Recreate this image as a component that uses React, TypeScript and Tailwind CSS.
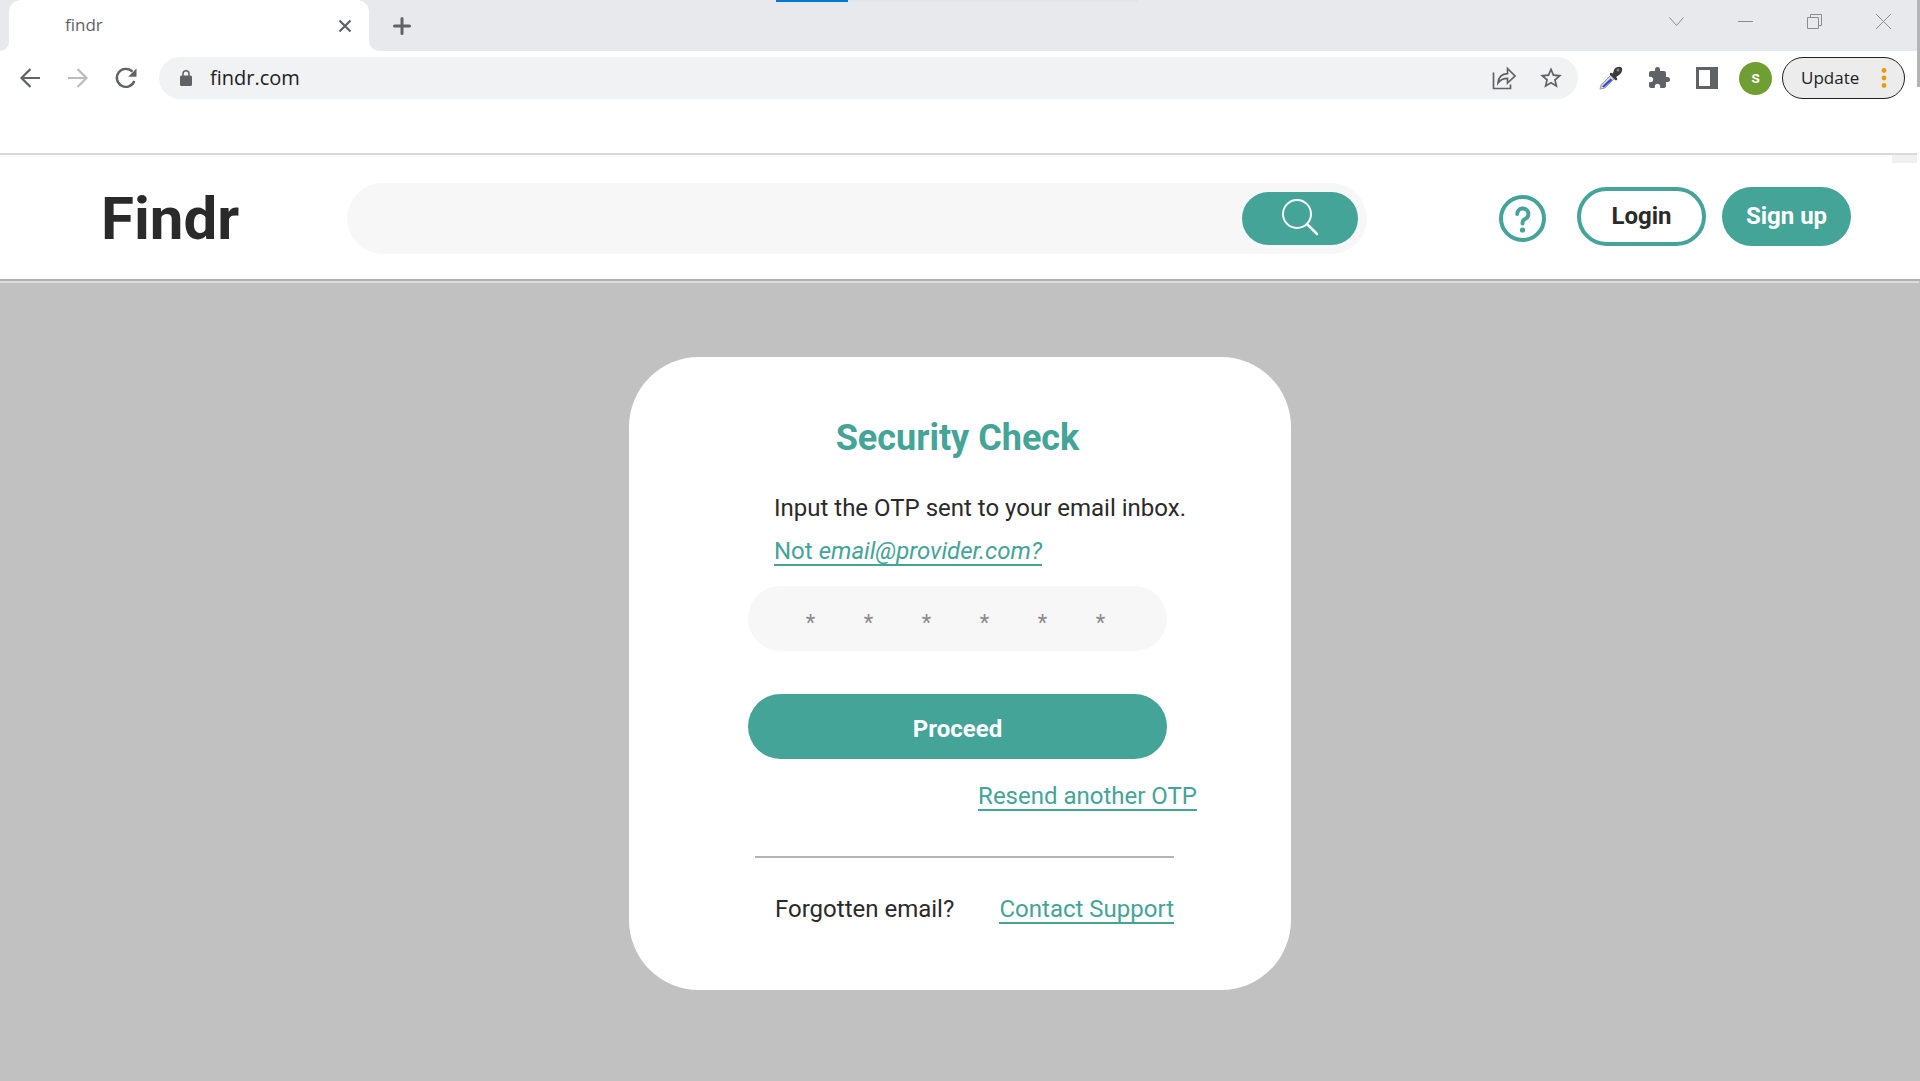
import React from "react";

function TabStrip() {
  return (
    <div className="flex h-[51px] bg-white">
      <div className="w-[9px] rounded-br-[10px] bg-[#e8e9ed]" />
      <div className="w-[360px] bg-[#e8e9ed]">
        <div className="flex h-full items-center justify-between rounded-t-[12px] bg-white pl-14 pr-[17px]">
          <span className="pb-0.5 font-['Open_Sans','Noto_Sans',sans-serif] text-[17px] text-[#5f6368]">findr</span>
          <button aria-label="Close tab">
            <svg width="14" height="14" viewBox="0 0 14 14" fill="none" stroke="#5f6368" strokeWidth="2.200" className="block">
              <path d="M1.500 1.500l11 11M12.500 1.500l-11 11" />
            </svg>
          </button>
        </div>
      </div>
      <div className="flex flex-1 items-center justify-between rounded-bl-[10px] bg-[#e8e9ed] pl-6 pr-7">
        <button aria-label="New tab">
          <svg width="18" height="18" viewBox="0 0 18 18" fill="none" stroke="#5f6368" strokeWidth="3" strokeLinecap="round" className="block">
            <path d="M9 1.500v15M1.500 9h15" />
          </svg>
        </button>
        <div className="flex items-center gap-[52px] pb-2">
          <button aria-label="Search tabs">
            <svg width="17" height="17" viewBox="0 0 17 17" fill="none" stroke="#8b8c90" className="block">
              <path d="M1.500 4.500l7 8 7-8" />
            </svg>
          </button>
          <button aria-label="Minimise">
            <svg width="17" height="17" viewBox="0 0 17 17" fill="none" stroke="#8b8c90" className="block">
              <path d="M1 8.500h15" />
            </svg>
          </button>
          <button aria-label="Restore">
            <svg width="17" height="17" viewBox="0 0 17 17" fill="none" stroke="#8b8c90" className="block">
              <path d="M1.500 4.500h11v11h-11zM4.500 4.500v-3h11v11h-3" />
            </svg>
          </button>
          <button aria-label="Close window">
            <svg width="17" height="17" viewBox="0 0 17 17" fill="none" stroke="#8b8c90" className="block">
              <path d="M1 1l15 15M16 1L1 16" />
            </svg>
          </button>
        </div>
      </div>
    </div>
  );
}

function Toolbar() {
  return (
    <div className="flex h-[54px] items-center pl-[18px] pr-[15px]">
      <div className="flex items-center gap-6">
        <button aria-label="Back">
          <svg width="24" height="24" viewBox="0 0 24 24" fill="none" stroke="#5f6368" strokeWidth="2.200" className="block">
            <path d="M22 12H3.500M12.500 3l-9 9 9 9" />
          </svg>
        </button>
        <button aria-label="Forward">
          <svg width="24" height="24" viewBox="0 0 24 24" fill="none" stroke="#bbbcbf" strokeWidth="2.200" className="block">
            <path d="M2 12h18.500M11.500 3l9 9-9 9" />
          </svg>
        </button>
        <button aria-label="Reload">
          <svg width="24" height="24" viewBox="0 0 24 24" fill="none" stroke="#5f6368" strokeWidth="2.400" className="block">
            <path d="M20.300 15a9 9 0 1 1-1.800-9.200" />
            <path d="M22.500 2.500v8.300h-8.300z" fill="#5f6368" stroke="none" />
          </svg>
        </button>
      </div>
      <div className="ml-[21px] flex h-[42px] flex-1 items-center rounded-full bg-[#f1f2f4] pl-[21px] pr-[14px]">
        <svg width="12" height="16" viewBox="0 0 12 16" className="block">
          <rect x="0" y="5.500" width="12" height="10.500" rx="1.500" fill="#5f6368" />
          <path d="M3 6V3.800a3 3 0 0 1 6 0V6" fill="none" stroke="#5f6368" strokeWidth="1.500" />
        </svg>
        <input
          aria-label="Address"
          defaultValue="findr.com"
          className="ml-[18px] min-w-0 flex-1 bg-transparent font-['Open_Sans','Noto_Sans',sans-serif] text-[20px] text-[#202124] outline-none"
        />
        <div className="flex items-center gap-[22px]">
          <button aria-label="Share">
            <svg width="24" height="24" viewBox="0 0 24 24" fill="none" stroke="#5f6368" strokeWidth="1.700" className="block">
              <path d="M1.500 6.500v16h17v-4" />
              <path d="M6 17c.5-6 3.500-9 9.500-9.300V2.500L23 10l-7.500 7v-4.600C11 12.400 8.200 14 6 17z" />
            </svg>
          </button>
          <button aria-label="Bookmark">
            <svg width="26" height="26" viewBox="0 0 24 24" fill="#5f6368" className="block">
              <path d="M22 9.240l-7.190-.62L12 2 9.190 8.630 2 9.240l5.460 4.730L5.820 21 12 17.270 18.180 21l-1.630-7.030L22 9.240zM12 15.400l-3.760 2.270 1-4.280-3.320-2.880 4.380-.38L12 6.100l1.710 4.040 4.380.38-3.320 2.880 1 4.280L12 15.400z" />
            </svg>
          </button>
        </div>
      </div>
      <div className="ml-[21px] flex items-center gap-6">
        <button aria-label="Colour picker">
          <svg width="24" height="24" viewBox="0 0 24 24" className="block">
            <path d="M1 23l1-4L13 8l3.500 3.500L6 22z" fill="#d5d7df" stroke="#9b9ca6" />
            <path d="M3 20.500l8.500-8 2 1.500-8.500 7.500z" fill="#3746d8" />
            <path d="M12 8l5 5" stroke="#3b3b3b" strokeWidth="2.500" strokeLinecap="round" />
            <path d="M13 8c1-1 1.500-2 2-4 1-3 6-4 7.500-2.500S23 7 20 9c-1.500 1-2.500 1.500-3 3z" fill="#3b3b3b" />
            <circle cx="19" cy="4" r="1.500" fill="#888" />
          </svg>
        </button>
        <button aria-label="Extensions">
          <svg width="24" height="24" viewBox="0 0 24 24" fill="#5f6368" className="block">
            <path d="M20.500 11H19V7c0-1.100-.9-2-2-2h-4V3.500a2.500 2.500 0 0 0-5 0V5H4c-1.100 0-1.990.9-1.990 2v3.800H3.500c1.490 0 2.700 1.210 2.700 2.700s-1.210 2.700-2.700 2.700H2V20c0 1.100.9 2 2 2h3.800v-1.500c0-1.490 1.210-2.700 2.700-2.700 1.490 0 2.700 1.210 2.700 2.700V22H17c1.100 0 2-.9 2-2v-4h1.500a2.500 2.500 0 0 0 0-5z" />
          </svg>
        </button>
        <button aria-label="Side panel">
          <svg width="24" height="24" viewBox="0 0 24 24" fill="#5f6368" className="block">
            <path fillRule="evenodd" d="M1 1h22v22H1zM4 4v16h11V4z" />
          </svg>
        </button>
      </div>
      <button
        aria-label="Profile"
        className="ml-5 flex size-[33px] items-center justify-center rounded-full bg-[#6f9e33] font-['Roboto',sans-serif] text-[17px] font-medium text-white"
      >
        s
      </button>
      <button className="ml-[10px] flex h-[42px] w-[123px] items-center justify-between rounded-full border border-[#202124] bg-[#ececec] pl-[18px] pr-[17px] font-['Open_Sans','Noto_Sans',sans-serif] text-[17px] text-[#202124]">
        Update
        <svg width="6" height="22" viewBox="0 0 6 22" fill="#ea9a0b" className="block">
          <circle cx="3" cy="3.500" r="2.400" />
          <circle cx="3" cy="11" r="2.400" />
          <circle cx="3" cy="18.500" r="2.400" />
        </svg>
      </button>
    </div>
  );
}

function SiteHeader() {
  return (
    <header className="flex h-[124px] items-center bg-white pl-[101px] pr-[69px] text-[#2a2a2a]">
      <a href="#" className="w-[246px] pt-1 text-[60px] leading-[70px] font-bold">
        Findr
      </a>
      <form role="search" className="mt-[3px] flex h-[71px] flex-1 items-center rounded-full bg-[#f7f7f7] pr-[9px] pl-9">
        <input aria-label="Search" className="min-w-0 flex-1 bg-transparent text-[24px] outline-none" />
        <button type="button" aria-label="Search" className="flex h-[53px] w-[116px] items-center justify-center rounded-full bg-[#44a498]">
          <svg width="38" height="38" viewBox="0 0 38 38" fill="none" stroke="white" strokeWidth="2" strokeLinecap="round" className="mb-1 block">
            <circle cx="16" cy="16" r="14" />
            <path d="M26 26l10 10" strokeWidth="2.500" />
          </svg>
        </button>
      </form>
      <button aria-label="Help" className="mt-[3px] ml-[132px]">
        <svg width="47" height="47" viewBox="0 0 47 47" fill="none" stroke="#44a498" strokeWidth="4" strokeLinecap="round" strokeLinejoin="round" className="block">
          <circle cx="23.500" cy="23.500" r="21.500" strokeWidth="4" />
          <path d="M18.200 19a5.600 5.600 0 1 1 7.800 5.200c-2 .8-2.500 1.300-2.500 4.300" />
          <circle cx="23.500" cy="35" r="2.600" fill="#44a498" stroke="none" />
        </svg>
      </button>
      <div className="ml-[31px] mb-0.5 flex gap-4 text-[24px] font-bold">
        <button className="h-[59px] w-[129px] rounded-full border-4 border-[#44a498]">Login</button>
        <button className="h-[59px] w-[129px] rounded-full bg-[#44a498] text-white">Sign up</button>
      </div>
    </header>
  );
}

const digits = [1, 2, 3, 4, 5, 6];

function SecurityCard() {
  return (
    <section className="mx-auto mt-[74px] w-[662px] rounded-[70px] bg-white pt-[59px] pr-[124px] pb-[66px] pl-[119px] text-[24px] leading-7 text-[#2a2a2a]">
      <h1 className="text-center text-[36px] leading-[44px] font-bold text-[#44a498]">Security Check</h1>
      <p className="mt-[34px] pl-[26px] whitespace-nowrap">Input the OTP sent to your email inbox.</p>
      <a href="#" className="mt-4 ml-[26px] block w-fit border-b-2 border-[#44a498] leading-[26px] text-[#44a498]">
        Not <em>email@provider.com?</em>
      </a>
      <form>
        <fieldset
          aria-label="One-time password"
          className="mt-5 flex h-[65px] items-center justify-center rounded-full bg-[#f7f7f7] pr-1"
        >
          {digits.map((digit) => (
            <input
              key={digit}
              aria-label={`Digit ${digit}`}
              placeholder="*"
              maxLength={1}
              className="w-[58px] bg-transparent pt-2 text-center text-[22px] outline-none placeholder:text-[#8a8a8a]"
            />
          ))}
        </fieldset>
        <button type="button" className="mt-[43px] h-[65px] w-full rounded-full bg-[#44a498] pt-1 font-bold text-white">
          Proceed
        </button>
      </form>
      <div className="-mr-[30px] mt-6 flex justify-end">
        <a href="#" className="border-b-2 border-[#44a498] leading-[26px] text-[#44a498]">
          Resend another OTP
        </a>
      </div>
      <div className="-mr-[7px] ml-[7px] mt-[45px] flex items-baseline justify-between border-t-2 border-[#b4b4b4] pt-[37px] pl-5">
        <span>Forgotten email?</span>
        <a href="#" className="border-b-2 border-[#44a498] leading-[26px] text-[#44a498]">
          Contact Support
        </a>
      </div>
    </section>
  );
}

export default function App() {
  return (
    <div className="flex min-h-screen flex-col bg-white font-['Roboto',sans-serif]">
      <div className="relative pb-[48px]">
        <TabStrip />
        <Toolbar />
        <div className="absolute top-0 left-1/2 -ml-[184px] flex h-[2px] w-[362px] bg-[#e4e5e3]">
          <div className="w-[72px] bg-[#0078d7]" />
        </div>
        <div className="absolute top-0 right-0 h-[87px] w-[3px] bg-[#b4b4b4]" />
      </div>
      <div className="relative mr-[3px] border-t-2 border-[#dadada]">
        <div className="absolute top-0 right-0 h-2 w-[25px] bg-[#f0f0f0]" />
      </div>
      <SiteHeader />
      <main className="flex-1 border-t-2 border-[#b1b1b1] bg-[#c1c1c1]">
        <div className="mr-px h-[2px] bg-[#dcdcdc]" />
        <SecurityCard />
      </main>
    </div>
  );
}
